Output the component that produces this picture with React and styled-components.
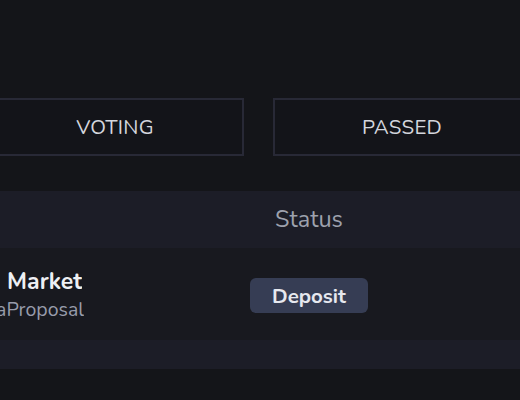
import React from "react";
import styled, { createGlobalStyle } from "styled-components";

const Global = createGlobalStyle`
  html, body { margin: 0; padding: 0; background: #141519; }
  body { font-family: "Nunito", Lato, "Noto Sans", sans-serif; overflow: hidden; width: 520px; height: 400px; }
`;

const Page = styled.div`
  margin-left: -14px;
  width: 560px;
  padding-top: 98px;
`;

const Tabs = styled.div`
  display: flex;
  gap: 29px;
`;

const Tab = styled.button`
  flex: 0 0 258px;
  height: 58px;
  box-sizing: border-box;
  background: #131419;
  border: 2px solid #282936;
  color: #d4d6dd;
  font-family: inherit;
  font-size: 20.5px;
  letter-spacing: 0.2px;
  display: flex;
  align-items: center;
  justify-content: center;
  padding: 0;
`;

const Table = styled.div`
  margin-top: 35px;
  display: grid;
  grid-template-columns: 223px 200px 1fr;
`;

const HeaderCell = styled.div`
  background: #1c1d27;
  height: 57px;
  display: flex;
  align-items: center;
  justify-content: ${(p) => (p.$center ? "center" : "flex-start")};
  color: #9da1ad;
  font-size: 23.5px;
  padding-bottom: 1px;
  box-sizing: border-box;
`;

const Cell = styled.div`
  background: #18191f;
  height: 92px;
  display: flex;
  flex-direction: column;
  justify-content: center;
  align-items: ${(p) => (p.$center ? "center" : "flex-start")};
  padding-left: ${(p) => p.$pad || 0}px;
  padding-top: ${(p) => p.$top ?? 3}px;
  box-sizing: border-box;
`;

const FootCell = styled.div`
  background: #1c1d27;
  height: 29px;
`;

const Name = styled.div`
  color: #eef0f4;
  font-weight: 700;
  font-size: 23px;
  line-height: 26px;
  white-space: nowrap;
`;

const Type = styled.div`
  color: #979cab;
  font-size: 19.5px;
  line-height: 24px;
  margin-top: -3px;
  white-space: nowrap;
`;

const Badge = styled.span`
  background: #363d54;
  color: #e6e8ef;
  font-weight: 700;
  font-size: 20.5px;
  border-radius: 6px;
  width: 118px;
  height: 35px;
  display: inline-flex;
  align-items: center;
  justify-content: center;
`;

const Clip = styled.span`
  display: inline-block;
  direction: rtl;
  overflow: hidden;
  width: ${(p) => p.$w}px;
  margin-left: ${(p) => p.$off || 0}px;
`;

export default function App() {
  return (
    <>
      <Global />
      <Page>
        <Tabs>
          <Tab>VOTING</Tab>
          <Tab>PASSED</Tab>
        </Tabs>
        <Table>
          <HeaderCell />
          <HeaderCell $center>Status</HeaderCell>
          <HeaderCell />
          <Cell $pad={14} $top={9}>
            <Name><Clip $off={4} $w={78}>New Market</Clip></Name>
            <Type><Clip $w={84}>CreateMetaProposal</Clip></Type>
          </Cell>
          <Cell $center>
            <Badge>Deposit</Badge>
          </Cell>
          <Cell />
          <FootCell />
          <FootCell />
          <FootCell />
        </Table>
      </Page>
    </>
  );
}
